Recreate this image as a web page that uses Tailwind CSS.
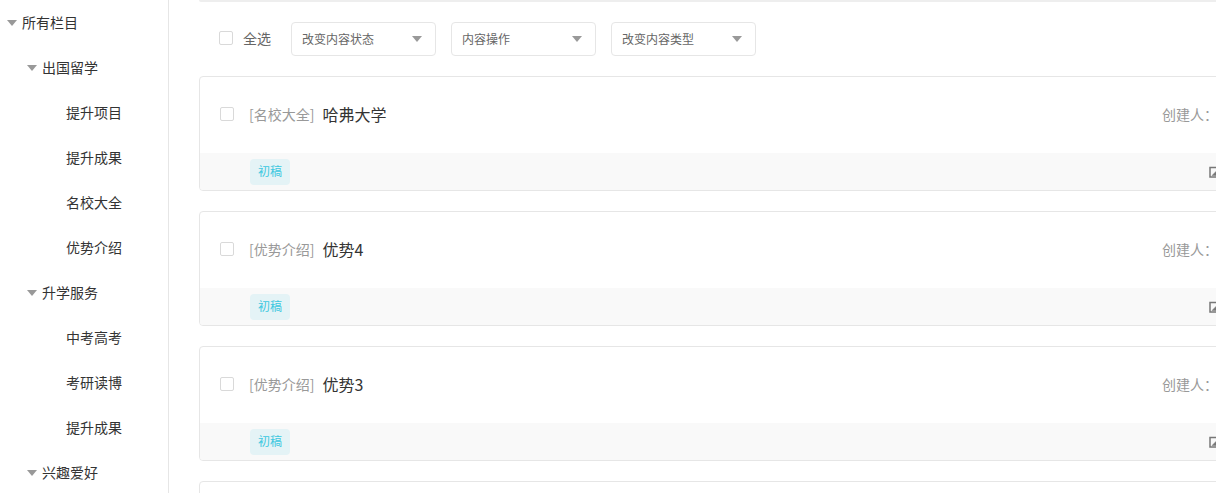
<!DOCTYPE html>
<html lang="zh">
<head>
<meta charset="utf-8">
<script src="https://cdn.jsdelivr.net/npm/@tailwindcss/browser@4"></script>
</head>
<body class="bg-white">
<div class="flex h-[493px] w-[1216px] overflow-hidden font-['Noto_Sans_CJK_SC','Noto_Sans',sans-serif] text-[14px] text-[#333]">
  <aside class="w-[169px] h-[493px] shrink-0 border-r border-[#e6e6e6] overflow-hidden">
    <div class="flex items-center h-[45px] pl-[7px]"><svg class="w-[10px] h-[6px] mr-[5px]" viewBox="0 0 10 6"><path d="M0 0h10L5 6z" fill="#999"/></svg>所有栏目</div>
    <div class="flex items-center h-[45px] pl-[27px]"><svg class="w-[10px] h-[6px] mr-[5px]" viewBox="0 0 10 6"><path d="M0 0h10L5 6z" fill="#999"/></svg>出国留学</div>
    <div class="flex items-center h-[45px] pl-[66px]">提升项目</div>
    <div class="flex items-center h-[45px] pl-[66px]">提升成果</div>
    <div class="flex items-center h-[45px] pl-[66px]">名校大全</div>
    <div class="flex items-center h-[45px] pl-[66px]">优势介绍</div>
    <div class="flex items-center h-[45px] pl-[27px]"><svg class="w-[10px] h-[6px] mr-[5px]" viewBox="0 0 10 6"><path d="M0 0h10L5 6z" fill="#999"/></svg>升学服务</div>
    <div class="flex items-center h-[45px] pl-[66px]">中考高考</div>
    <div class="flex items-center h-[45px] pl-[66px]">考研读博</div>
    <div class="flex items-center h-[45px] pl-[66px]">提升成果</div>
    <div class="flex items-center h-[45px] pl-[27px]"><svg class="w-[10px] h-[6px] mr-[5px]" viewBox="0 0 10 6"><path d="M0 0h10L5 6z" fill="#999"/></svg>兴趣爱好</div>
  </aside>
  <main class="flex-1 min-w-0 pl-[30px]">
    <div class="w-[1100px]">
      <div class="h-[2px] bg-[#eeeeee] rounded-b-[2px]"></div>
      <div class="flex items-center h-[74px] pl-[20px]">
        <span class="w-[14px] h-[14px] mb-[2px] border border-[#d9d9d9] rounded-[2px] mr-[10px]"></span>
        <span class="text-[#666] mb-[2px] mr-[20px]">全选</span>
        <div class="flex items-center justify-between w-[145px] h-[34px] border border-[#e6e6e6] rounded-[4px] pl-[10px] pr-[13px] text-[12px] text-[#666] mr-[15px]">改变内容状态<svg class="w-[10px] h-[6px]" viewBox="0 0 10 6"><path d="M0 0h10L5 6z" fill="#999"/></svg></div>
        <div class="flex items-center justify-between w-[145px] h-[34px] border border-[#e6e6e6] rounded-[4px] pl-[10px] pr-[13px] text-[12px] text-[#666] mr-[15px]">内容操作<svg class="w-[10px] h-[6px]" viewBox="0 0 10 6"><path d="M0 0h10L5 6z" fill="#999"/></svg></div>
        <div class="flex items-center justify-between w-[145px] h-[34px] border border-[#e6e6e6] rounded-[4px] pl-[10px] pr-[13px] text-[12px] text-[#666]">改变内容类型<svg class="w-[10px] h-[6px]" viewBox="0 0 10 6"><path d="M0 0h10L5 6z" fill="#999"/></svg></div>
      </div>
      <article class="h-[115px] mb-[20px] border border-[#e6e6e6] rounded-[4px] overflow-hidden flex flex-col">
        <div class="flex items-center h-[76px] pb-[2px] pl-[20px]">
          <span class="w-[14px] h-[14px] border border-[#d9d9d9] rounded-[2px] mr-[15px]"></span>
          <span class="text-[14px] text-[#999] mr-[8px]">[名校大全]</span>
          <span class="text-[16px] text-[#333]">哈弗大学</span>
          <span class="ml-auto w-[136px] text-[#999] text-[14px]">创建人：</span>
        </div>
        <div class="flex items-center flex-1 bg-[#f9f9f9] pl-[50px]">
          <span class="flex items-center justify-center w-[40px] h-[26px] pb-[2px] rounded-[4px] bg-[#e4f3f6] text-[12px] text-[#3cc8e0]">初稿</span>
          <svg class="ml-[919px] w-[12px] h-[12px] shrink-0" viewBox="0 0 12 12" fill="none" stroke="#777" stroke-width="1.5"><path d="M1 1.5h10v9.5H1z"/><path d="M3 9.5l4-4 1 1-1 3z" fill="#777" stroke-width="0.5"/></svg>
        </div>
      </article>
      <article class="h-[115px] mb-[20px] border border-[#e6e6e6] rounded-[4px] overflow-hidden flex flex-col">
        <div class="flex items-center h-[76px] pb-[2px] pl-[20px]">
          <span class="w-[14px] h-[14px] border border-[#d9d9d9] rounded-[2px] mr-[15px]"></span>
          <span class="text-[14px] text-[#999] mr-[8px]">[优势介绍]</span>
          <span class="text-[16px] text-[#333]">优势4</span>
          <span class="ml-auto w-[136px] text-[#999] text-[14px]">创建人：</span>
        </div>
        <div class="flex items-center flex-1 bg-[#f9f9f9] pl-[50px]">
          <span class="flex items-center justify-center w-[40px] h-[26px] pb-[2px] rounded-[4px] bg-[#e4f3f6] text-[12px] text-[#3cc8e0]">初稿</span>
          <svg class="ml-[919px] w-[12px] h-[12px] shrink-0" viewBox="0 0 12 12" fill="none" stroke="#777" stroke-width="1.5"><path d="M1 1.5h10v9.5H1z"/><path d="M3 9.5l4-4 1 1-1 3z" fill="#777" stroke-width="0.5"/></svg>
        </div>
      </article>
      <article class="h-[115px] mb-[20px] border border-[#e6e6e6] rounded-[4px] overflow-hidden flex flex-col">
        <div class="flex items-center h-[76px] pb-[2px] pl-[20px]">
          <span class="w-[14px] h-[14px] border border-[#d9d9d9] rounded-[2px] mr-[15px]"></span>
          <span class="text-[14px] text-[#999] mr-[8px]">[优势介绍]</span>
          <span class="text-[16px] text-[#333]">优势3</span>
          <span class="ml-auto w-[136px] text-[#999] text-[14px]">创建人：</span>
        </div>
        <div class="flex items-center flex-1 bg-[#f9f9f9] pl-[50px]">
          <span class="flex items-center justify-center w-[40px] h-[26px] pb-[2px] rounded-[4px] bg-[#e4f3f6] text-[12px] text-[#3cc8e0]">初稿</span>
          <svg class="ml-[919px] w-[12px] h-[12px] shrink-0" viewBox="0 0 12 12" fill="none" stroke="#777" stroke-width="1.5"><path d="M1 1.5h10v9.5H1z"/><path d="M3 9.5l4-4 1 1-1 3z" fill="#777" stroke-width="0.5"/></svg>
        </div>
      </article>
      <article class="h-[115px] border border-[#e6e6e6] rounded-[4px]"></article>
    </div>
  </main>
</div>
</body>
</html>
